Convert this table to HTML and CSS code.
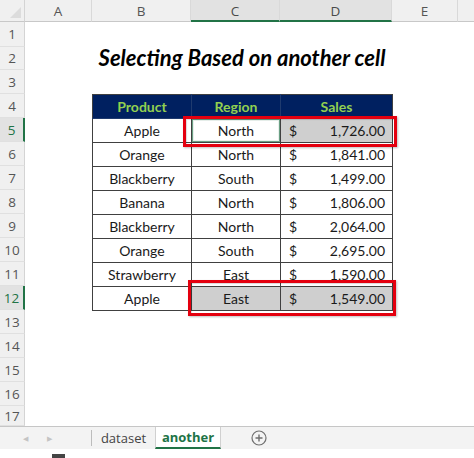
FILE: index.html
```html
<!DOCTYPE html>
<html>
<head>
<meta charset="utf-8">
<link rel="stylesheet" href="styles.css">
</head>
<body>
<div class="app">
  <div class="sheet">
    <div class="corner"><span class="tri"></span></div>
    <div class="colh">A</div>
    <div class="colh">B</div>
    <div class="colh sel">C</div>
    <div class="colh sel">D</div>
    <div class="colh">E</div>
    <div class="colh last"></div>

    <div class="rowh r1">1</div>
    <div class="rowh r2">2</div>
    <div class="rowh r3">3</div>
    <div class="rowh r4">4</div>
    <div class="rowh r5 sel">5</div>
    <div class="rowh r6">6</div>
    <div class="rowh r7">7</div>
    <div class="rowh r8">8</div>
    <div class="rowh r9">9</div>
    <div class="rowh r10">10</div>
    <div class="rowh r11">11</div>
    <div class="rowh r12 sel">12</div>
    <div class="rowh r13">13</div>
    <div class="rowh r14">14</div>
    <div class="rowh r15">15</div>
    <div class="rowh r16">16</div>
    <div class="rowh r17">17</div>

    <div class="body"></div>

    <div class="title">Selecting Based on another cell</div>

    <table class="data">
      <tr class="head"><th>Product</th><th>Region</th><th>Sales</th></tr>
      <tr><td>Apple</td><td class="active">North</td><td class="money grey"><span>$</span><span>1,726.00</span></td></tr>
      <tr><td>Orange</td><td>North</td><td class="money"><span>$</span><span>1,841.00</span></td></tr>
      <tr><td>Blackberry</td><td>South</td><td class="money"><span>$</span><span>1,499.00</span></td></tr>
      <tr><td>Banana</td><td>North</td><td class="money"><span>$</span><span>1,806.00</span></td></tr>
      <tr><td>Blackberry</td><td>North</td><td class="money"><span>$</span><span>2,064.00</span></td></tr>
      <tr><td>Orange</td><td>South</td><td class="money"><span>$</span><span>2,695.00</span></td></tr>
      <tr><td>Strawberry</td><td>East</td><td class="money"><span>$</span><span>1,590.00</span></td></tr>
      <tr><td>Apple</td><td class="grey">East</td><td class="money grey"><span>$</span><span>1,549.00</span></td></tr>
    </table>

    <div class="redbox box1"></div>
    <div class="redbox box2"></div>
  </div>

  <div class="tabbar">
    <div class="nav">
      <span class="arrow">&#9664;</span>
      <span class="arrow">&#9654;</span>
    </div>
    <div class="tab">dataset</div>
    <div class="tab active">another</div>
    <div class="add">
      <svg width="16" height="16" viewBox="0 0 16 16">
        <circle cx="8" cy="8" r="7" fill="none" stroke="#6f6f6f" stroke-width="1.2"/>
        <path d="M8 4.5v7M4.5 8h7" stroke="#6f6f6f" stroke-width="1.4"/>
      </svg>
    </div>
  </div>
  <div class="status"><span class="sq"></span></div>
</div>
</body>
</html>
```

FILE: styles.css
```css
* { box-sizing: border-box; }
html, body { margin: 0; padding: 0; background: #fff; }
.app {
  width: 474px;
  height: 458px;
  overflow: hidden;
  font-family: Lato, "Open Sans", sans-serif;
  display: flex;
  flex-direction: column;
}
.sheet {
  display: grid;
  grid-template-columns: 25px 67px 99px 89px 112px 66px 1fr;
  grid-template-rows: 22px 25px 23px 24px 24px repeat(12, 24px) 20px;
  height: 426px;
  overflow: hidden;
  position: relative;
}
.corner {
  grid-column: 1; grid-row: 1;
  background: #f0f0f0;
  border-right: 1px solid #d4d4d4;
  border-bottom: 1px solid #c8c8c8;
  position: relative;
}
.tri {
  position: absolute;
  right: 3px; bottom: 3px;
  width: 0; height: 0;
  border-left: 11px solid transparent;
  border-bottom: 11px solid #dcdcdc;
}
.colh {
  grid-row: 1;
  background: #f0f0f0;
  border-right: 1px solid #d9d9d9;
  border-bottom: 1px solid #c8c8c8;
  color: #555;
  font-family: "Open Sans", sans-serif;
  font-size: 13.5px;
  display: flex;
  align-items: center;
  justify-content: center;
  padding-top: 1px;
}
.colh.sel {
  background: #e2e2e2;
  color: #4a4a4a;
  border-bottom: 2px solid #217346;
}
.colh.last { border-right: none; }
.rowh {
  grid-column: 1;
  background: #f0f0f0;
  border-right: 1px solid #d4d4d4;
  border-bottom: 1px solid #e0e0e0;
  color: #555;
  font-family: "Open Sans", sans-serif;
  font-size: 13.5px;
  display: flex;
  align-items: center;
  justify-content: center;
}
.rowh.sel {
  background: #e2e2e2;
  color: #217346;
  border-right: 2px solid #217346;
}
.r1 { grid-row: 2; } .r2 { grid-row: 3; } .r3 { grid-row: 4; } .r4 { grid-row: 5; }
.r5 { grid-row: 6; } .r6 { grid-row: 7; } .r7 { grid-row: 8; } .r8 { grid-row: 9; }
.r9 { grid-row: 10; } .r10 { grid-row: 11; } .r11 { grid-row: 12; } .r12 { grid-row: 13; }
.r13 { grid-row: 14; } .r14 { grid-row: 15; } .r15 { grid-row: 16; } .r16 { grid-row: 17; }
.r17 { grid-row: 18; }

.body {
  grid-column: 2 / 8;
  grid-row: 2 / 19;
  background: #fff;
}
.title {
  grid-column: 3 / 6;
  grid-row: 3;
  align-self: center;
  text-align: center;
  font-family: Lato, sans-serif;
  font-weight: 700;
  font-style: italic;
  font-size: 22px;
  line-height: 22px;
  margin-top: -2px;
  color: #000;
  white-space: nowrap;
}
.data {
  grid-column: 3 / 6;
  grid-row: 5 / 14;
  border-collapse: collapse;
  table-layout: fixed;
  width: 300px;
  font-family: Lato, sans-serif;
  font-size: 14px;
  color: #1a1a1a;
}
.data tr { height: 24px; }
.data th, .data td {
  border: 1px solid #404040;
  padding: 0;
  text-align: center;
  height: 24px;
  line-height: 22px;
}
.data th:nth-child(1), .data td:nth-child(1) { width: 99px; }
.data th:nth-child(2), .data td:nth-child(2) { width: 89px; }
.data th:nth-child(3), .data td:nth-child(3) { width: 112px; }
.data .head th {
  background: #002060;
  color: #92d050;
  font-weight: 700;
  border-color: #1f3a6e;
  border-top-color: #404040;
}
.data .head th:first-child { border-left-color: #404040; }
.data .head th:last-child { border-right-color: #404040; }
.data td.money {
  text-align: left;
}
.data td.money span:first-child {
  float: left;
  padding-left: 8px;
}
.data td.money span:last-child {
  float: right;
  padding-right: 7px;
}
.data td.grey { background: #cfcfcf; }
.data td.active {
  box-shadow: inset 0 0 0 1px #6b9f84, inset 0 0 0 2px #e8f0ec;
}

.redbox {
  border: 3px solid #e4000f;
  box-shadow: 1px 1px 2px rgba(0,0,0,0.25), inset 1px 1px 1px rgba(0,0,0,0.15);
  z-index: 2;
  pointer-events: none;
}
.box1 {
  grid-column: 4 / 6;
  grid-row: 6;
  margin: -2px -5px -5px -8px;
}
.box2 {
  grid-column: 4 / 6;
  grid-row: 13;
  margin: -6px -4px -6px -3px;
}

.tabbar {
  height: 23px;
  background: #f3f3f3;
  border-top: 1px solid #c6c6c6;
  display: flex;
  align-items: stretch;
  font-family: "Open Sans", sans-serif;
  font-size: 13px;
}
.nav {
  width: 92px;
  display: flex;
  align-items: center;
  gap: 19px;
  padding-left: 23px;
  border-right: 1px solid #bcbcbc;
  margin: 3px 0 3px 0;
}
.arrow {
  color: #c4c4c4;
  font-size: 7px;
}
.tab {
  display: flex;
  align-items: center;
  justify-content: center;
  width: 63px;
  color: #444;
}
.tab.active {
  width: 66px;
  background: #fff;
  color: #217346;
  font-weight: 700;
  border-left: 1px solid #d0d0d0;
  border-right: 1px solid #d0d0d0;
  border-bottom: 2px solid #217346;
}
.add {
  display: flex;
  align-items: center;
  padding-left: 30px;
}
.status {
  flex: 1;
  background: #fff;
  position: relative;
}
.sq {
  position: absolute;
  left: 52px;
  bottom: 0;
  width: 13px;
  height: 4px;
  background: #444;
}
```
